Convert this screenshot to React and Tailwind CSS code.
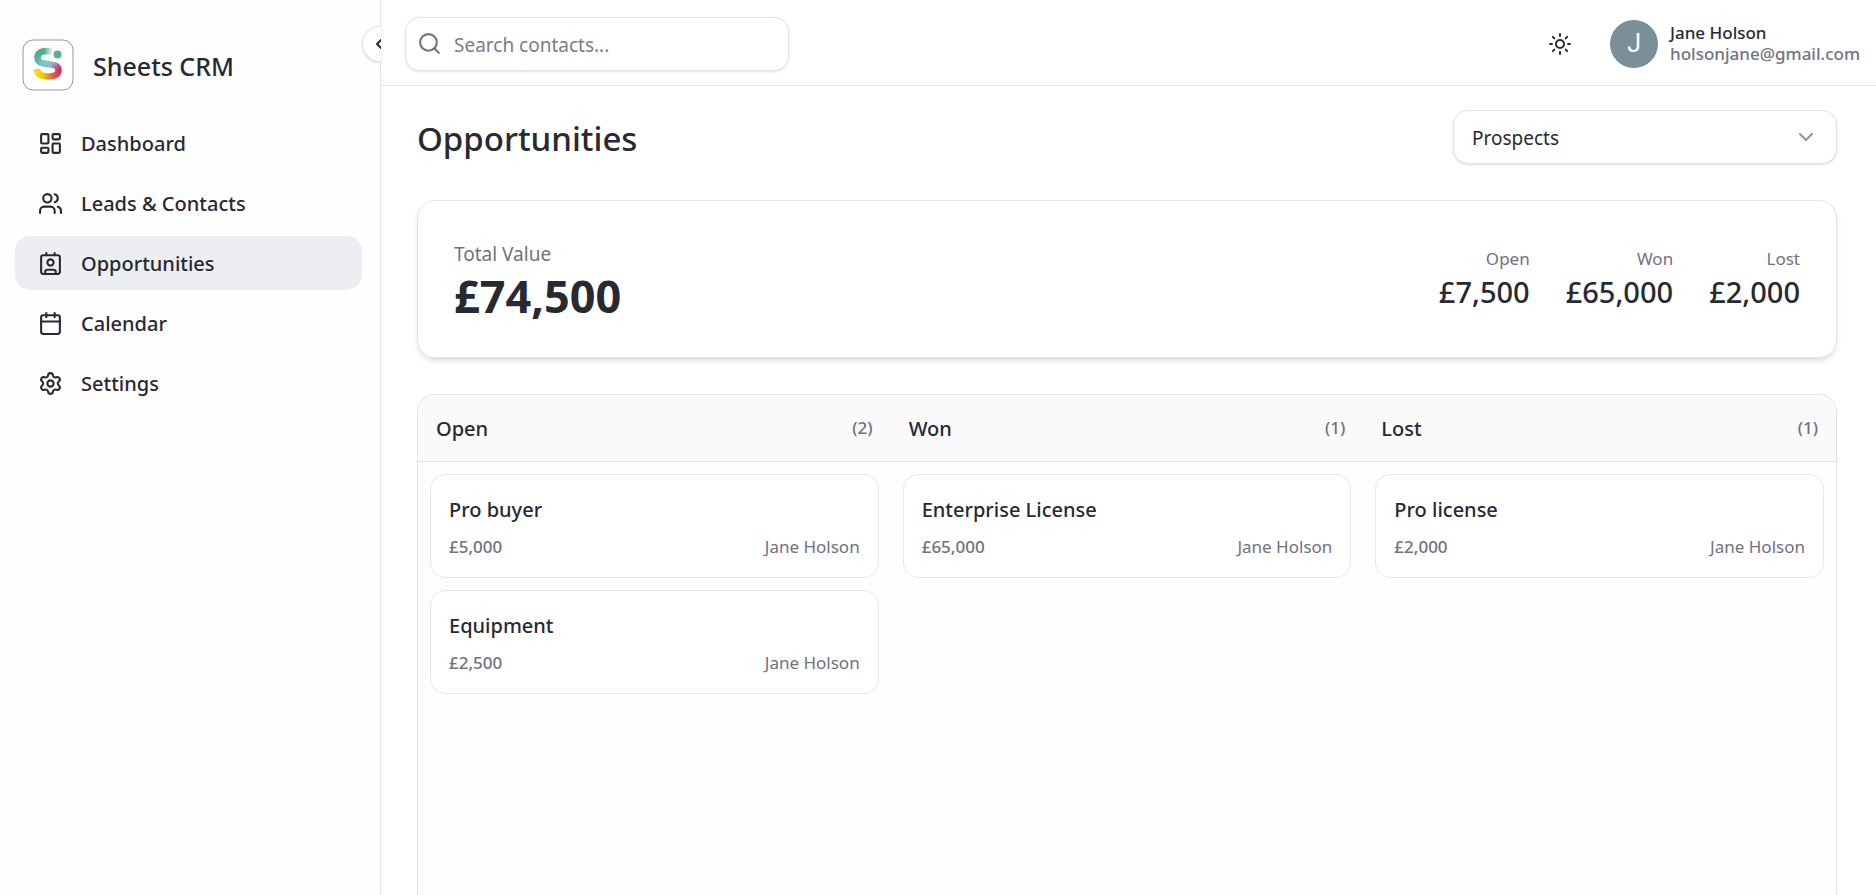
import { useState } from "react";
import {
  Calendar,
  ChevronDown,
  ChevronLeft,
  Contact,
  LayoutDashboard,
  Search,
  Settings,
  Sun,
  Users,
} from "lucide-react";

const navItems = [
  { label: "Dashboard", icon: LayoutDashboard },
  { label: "Leads & Contacts", icon: Users },
  { label: "Opportunities", icon: Contact },
  { label: "Calendar", icon: Calendar },
  { label: "Settings", icon: Settings },
];

const totals = [
  { label: "Open", value: "£7,500" },
  { label: "Won", value: "£65,000" },
  { label: "Lost", value: "£2,000" },
];

const columns = [
  {
    name: "Open",
    deals: [
      { title: "Pro buyer", value: "£5,000", owner: "Jane Holson" },
      { title: "Equipment", value: "£2,500", owner: "Jane Holson" },
    ],
  },
  {
    name: "Won",
    deals: [
      { title: "Enterprise License", value: "£65,000", owner: "Jane Holson" },
    ],
  },
  {
    name: "Lost",
    deals: [{ title: "Pro license", value: "£2,000", owner: "Jane Holson" }],
  },
];

function Logo() {
  return (
    <svg width="52" height="52" viewBox="0 0 52 52" fill="none" aria-hidden="true">
      <defs>
        <linearGradient id="top" x1="14" y1="0" x2="31" y2="0" gradientUnits="userSpaceOnUse">
          <stop offset="0" stopColor="#4fab98" />
          <stop offset="0.5" stopColor="#55ad8c" />
          <stop offset="1" stopColor="#ffffff" />
        </linearGradient>
        <linearGradient id="middle" x1="14" y1="17" x2="37" y2="31" gradientUnits="userSpaceOnUse">
          <stop offset="0" stopColor="#4fab98" />
          <stop offset="0.35" stopColor="#7fc0d4" />
          <stop offset="0.65" stopColor="#8fb5d2" />
          <stop offset="1" stopColor="#d42a62" />
        </linearGradient>
        <linearGradient id="bottom" x1="12" y1="0" x2="38" y2="0" gradientUnits="userSpaceOnUse">
          <stop offset="0" stopColor="#f2ea00" />
          <stop offset="0.35" stopColor="#e9c916" />
          <stop offset="0.7" stopColor="#df6a48" />
          <stop offset="1" stopColor="#d42a62" />
        </linearGradient>
      </defs>
      <rect x="1" y="1" width="50" height="50" rx="10" fill="#fff" stroke="#9a9a9a" />
      <path d="M31 12H26C19 12 15.500 14.500 15.500 18.500" stroke="url(#top)" strokeWidth="6.500" />
      <path
        d="M15.500 18C15.500 22 18 24 22 24.500L29 25.500C34 26 36.500 28 36.500 31.500"
        stroke="url(#middle)"
        strokeWidth="6.500"
      />
      <path
        d="M36.500 31C36.500 35.500 32 37.500 27 37.500C19 37.500 15 35 15 30"
        stroke="url(#bottom)"
        strokeWidth="6.500"
      />
      <circle cx="35.500" cy="15.500" r="4" fill="#5bb08d" />
    </svg>
  );
}

function Sidebar() {
  return (
    <aside className="relative w-[381px] shrink-0 border-r border-[#e4e4e7] bg-[#fefefe] pt-[38px] pr-[18px] pl-[15px]">
      <div className="flex h-[54px] items-center gap-[19px] pl-[7px]">
        <Logo />
        <span className="pt-[2px] text-[25px] leading-[30px] font-medium">Sheets CRM</span>
      </div>
      <nav className="mt-[24px] flex flex-col gap-[6px]">
        {navItems.map(({ label, icon: Icon }) => (
          <a
            key={label}
            href="#"
            aria-current={label === "Opportunities" ? "page" : undefined}
            className="flex h-[54px] items-center gap-[18px] rounded-[15px] px-[23px] text-[20px] font-medium aria-[current=page]:bg-[#edeef2]"
          >
            <Icon size={25} className="shrink-0" />
            <span className="pt-[2px]">{label}</span>
          </a>
        ))}
      </nav>
      <button
        aria-label="Collapse sidebar"
        className="absolute top-[26px] -right-px flex h-[36px] w-[19px] items-center justify-end overflow-hidden rounded-l-full border border-r-0 border-[#e4e4e7] bg-white shadow-sm"
      >
        <ChevronLeft size={16} strokeWidth={3} className="-mr-[6px] shrink-0" />
      </button>
    </aside>
  );
}

function TopBar() {
  return (
    <header className="flex h-[86px] items-center justify-between border-b border-[#e4e4e7] pt-[2px] pr-[16px] pl-[24px]">
      <label className="flex h-[54px] w-[384px] items-center gap-[12px] rounded-[15px] border border-[#e4e4e7] px-[11px] shadow-sm">
        <Search size={25} className="shrink-0 text-[#71717f]" />
        <input
          type="search"
          aria-label="Search contacts"
          placeholder="Search contacts..."
          className="w-full min-w-0 pt-[4px] text-[19px] outline-none placeholder:text-[#7b7b8b]"
        />
      </label>
      <div className="flex items-center gap-[38px]">
        <button aria-label="Toggle theme">
          <Sun size={24} />
        </button>
        <div className="flex items-center gap-[12px]">
          <span className="flex size-[48px] items-center justify-center rounded-full bg-[#7b8f9a] font-[Roboto] text-[25px] text-white">
            J
          </span>
          <div className="pb-[2px] text-[17px] leading-[21px] font-medium">
            <p>Jane Holson</p>
            <p className="text-[#737384]">holsonjane@gmail.com</p>
          </div>
        </div>
      </div>
    </header>
  );
}

function DealCard({ deal }) {
  return (
    <article className="rounded-[15px] border border-[#e8e8ea] bg-white px-[18px] pt-[20px] pb-[18px]">
      <h3 className="text-[20px] leading-[30px] font-medium">{deal.title}</h3>
      <div className="mt-[10px] flex items-center justify-between text-[17px] leading-[24px] text-[#71717f]">
        <span className="font-medium">{deal.value}</span>
        <span>{deal.owner}</span>
      </div>
    </article>
  );
}

export default function App() {
  const [pipeline, setPipeline] = useState("Prospects");

  return (
    <div className="flex h-screen overflow-hidden bg-white font-['Noto_Sans','Open_Sans',sans-serif] text-[#272933]">
      <Sidebar />
      <div className="flex min-w-0 flex-1 flex-col">
        <TopBar />
        <main className="flex min-h-0 flex-1 flex-col overflow-hidden pt-[24px] pr-[39px] pl-[36px]">
          <div className="flex items-center justify-between">
            <h1 className="pt-[4px] text-[33px] leading-[42px] font-medium">Opportunities</h1>
            <div className="relative w-[384px]">
              <select
                aria-label="Pipeline"
                value={pipeline}
                onChange={(e) => setPipeline(e.target.value)}
                className="h-[54px] w-full appearance-none rounded-[15px] border border-[#e4e4e7] bg-white px-[18px] pt-[2px] text-[19px] shadow-sm"
              >
                <option>Prospects</option>
                <option>Customers</option>
              </select>
              <ChevronDown
                size={24}
                className="pointer-events-none absolute top-[15px] right-[19px] text-[#939396]"
              />
            </div>
          </div>

          <section className="mt-[36px] flex h-[158px] shrink-0 items-center justify-between rounded-[18px] border border-[#e4e4e7] px-[36px] shadow-md">
            <div className="pt-[4px]">
              <p className="text-[19px] leading-[30px] text-[#71717f]">Total Value</p>
              <p className="text-[45px] leading-[54px] font-bold">£74,500</p>
            </div>
            <div className="flex gap-[36px] pt-[2px] text-right">
              {totals.map((total) => (
                <div key={total.label}>
                  <p className="text-[17px] leading-[24px] text-[#71717f]">{total.label}</p>
                  <p className="text-[29px] leading-[42px] font-medium">{total.value}</p>
                </div>
              ))}
            </div>
          </section>

          <section className="mt-[36px] flex min-h-0 flex-1 flex-col rounded-t-[18px] border border-b-0 border-[#e4e4e7] bg-[#fdfdfd]">
            <div className="grid h-[67px] shrink-0 grid-cols-3 items-center rounded-t-[17px] border-b border-[#e4e4e7] bg-[#fafafa]">
              {columns.map((column) => (
                <div key={column.name} className="flex items-center justify-between px-[18px]">
                  <h2 className="pt-[2px] text-[20px] font-medium">{column.name}</h2>
                  <span className="text-[17px] font-medium text-[#71717f]">
                    ({column.deals.length})
                  </span>
                </div>
              ))}
            </div>
            <div className="grid grid-cols-3">
              {columns.map((column) => (
                <div key={column.name} className="flex flex-col gap-[12px] p-[12px]">
                  {column.deals.map((deal) => (
                    <DealCard key={deal.title} deal={deal} />
                  ))}
                </div>
              ))}
            </div>
          </section>
        </main>
      </div>
    </div>
  );
}
